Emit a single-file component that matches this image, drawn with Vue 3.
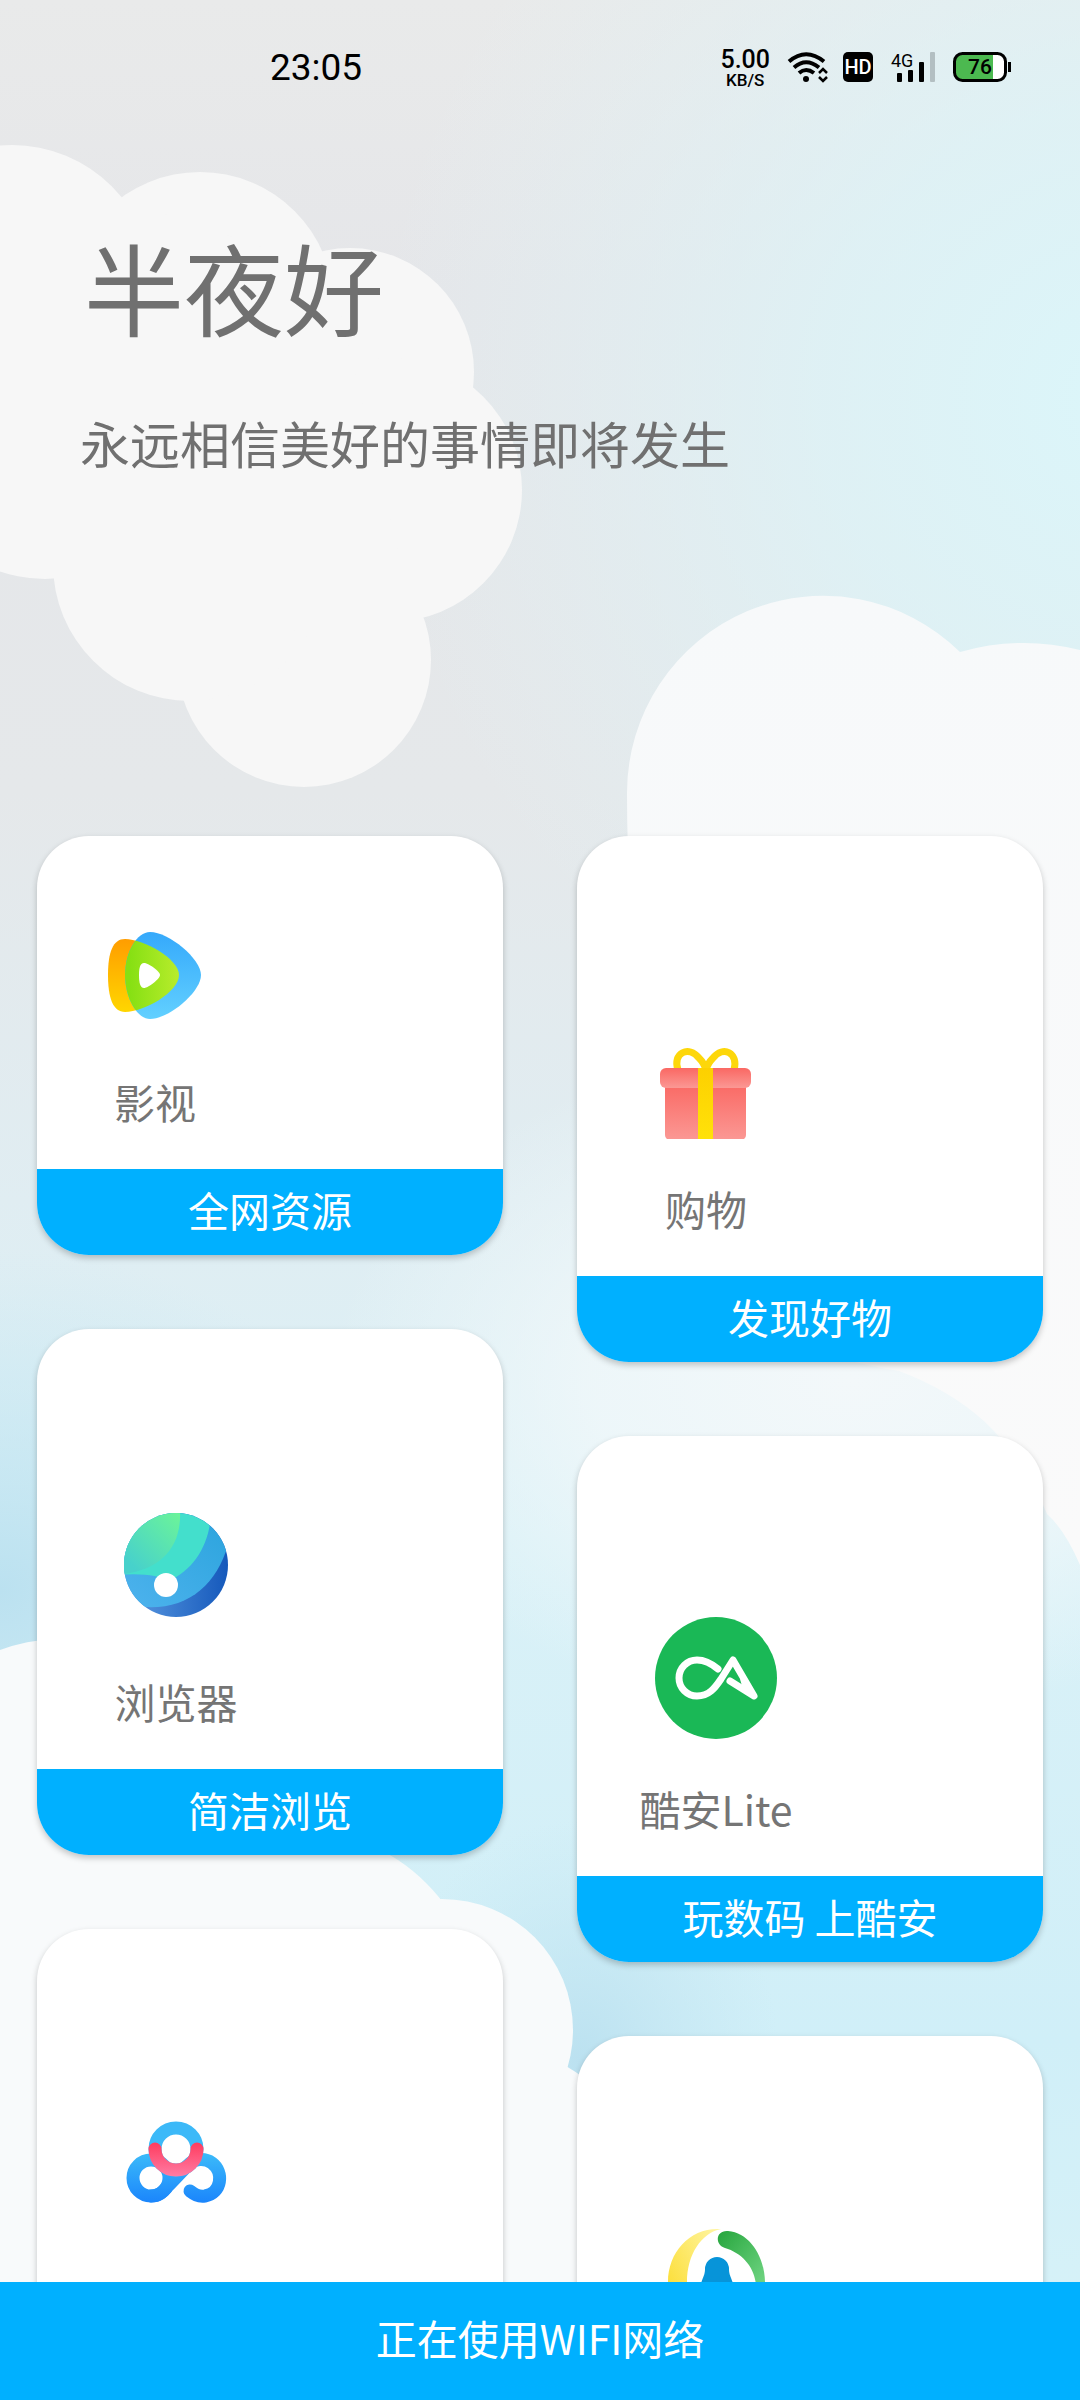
<script setup>
const columns = [
  [
    { id: 'video', name: '影视', tag: '全网资源', size: 'small' },
    { id: 'browser', name: '浏览器', tag: '简洁浏览', size: 'large' },
    { id: 'disk', name: '', tag: '', size: 'large' }
  ],
  [
    { id: 'gift', name: '购物', tag: '发现好物', size: 'medium' },
    { id: 'coolapk', name: '酷安Lite', tag: '玩数码 上酷安', size: 'large' },
    { id: 'ring', name: '', tag: '', size: 'large' }
  ]
]
</script>

<template>
  <div class="screen">
    <svg class="wallpaper" viewBox="0 0 1080 2400" preserveAspectRatio="xMidYMid slice" aria-hidden="true">
      <defs>
        <linearGradient id="sky" x1="0" y1="0" x2="0" y2="1">
          <stop offset="0" stop-color="#e9eaea" />
          <stop offset=".12" stop-color="#e5e6e9" />
          <stop offset=".33" stop-color="#e5e8ea" />
          <stop offset=".5" stop-color="#e0edf2" />
          <stop offset=".64" stop-color="#daf1f7" />
          <stop offset=".85" stop-color="#d0eff8" />
          <stop offset="1" stop-color="#d8f2f8" />
        </linearGradient>
        <radialGradient id="glowRight"><stop offset="0" stop-color="#dbf6fa" /><stop offset=".4" stop-color="#dcf4f8" stop-opacity=".75" /><stop offset="1" stop-color="#e0f2f6" stop-opacity="0" /></radialGradient>
        <radialGradient id="glowLeft"><stop offset="0" stop-color="#bbe1f0" /><stop offset="1" stop-color="#c5e7f2" stop-opacity="0" /></radialGradient>
        <radialGradient id="glowMid"><stop offset="0" stop-color="#f3f8fa" /><stop offset=".5" stop-color="#f1f8fa" stop-opacity=".8" /><stop offset="1" stop-color="#eef8fa" stop-opacity="0" /></radialGradient>
        <linearGradient id="cloudFade" x1="0" y1="0" x2="0" y2="1"><stop offset="0" stop-color="#f7f9fa" /><stop offset="1" stop-color="#fafafa" /></linearGradient>
      </defs>
      <rect width="1080" height="2400" fill="url(#sky)" />
      <ellipse cx="1130" cy="400" rx="760" ry="740" fill="url(#glowRight)" />
      <ellipse cx="0" cy="1590" rx="420" ry="340" fill="url(#glowLeft)" />
      <ellipse cx="580" cy="2060" rx="200" ry="240" fill="url(#glowLeft)" />
      <ellipse cx="850" cy="1380" rx="520" ry="340" fill="url(#glowMid)" />
      <g fill="#f7f7f7">
        <circle cx="12" cy="286" r="141" />
        <circle cx="200" cy="306" r="134" />
        <circle cx="350" cy="372" r="124" />
        <circle cx="390" cy="490" r="132" />
        <circle cx="304" cy="660" r="127" />
        <circle cx="190" cy="564" r="137" />
        <circle cx="45" cy="440" r="139" />
        <path d="M0 220 115 197 330 270 400 560 280 640 60 560 0 500Z" />
      </g>
      <path fill="url(#cloudFade)" d="M627 793A196 197 0 0 1 960 652Q1020 635 1080 650V1565Q1065 1530 1047 1514Q1025 1460 985 1422Q950 1390 899 1371Q760 1350 690 1250Q640 1160 640 1000Q627 900 627 793Z" />
      <g fill="#f8fafb">
        <circle cx="60" cy="1807" r="168" />
        <circle cx="295" cy="2015" r="186" />
        <circle cx="442" cy="2030" r="131" />
        <circle cx="470" cy="2230" r="190" />
        <path d="M0 1700 200 1780 400 1880 520 2400H0Z" />
      </g>
    </svg>

    <header class="status">
      <time class="clock">23:05</time>
      <div class="indicators">
        <div class="speed"><b>5.00</b><span>KB/S</span></div>
        <svg width="37" height="30" viewBox="0 0 37 30" overflow="visible" aria-label="Wi-Fi">
          <g fill="none" stroke="#000" stroke-width="4">
            <path d="M1 9.500Q18 -5 36 9.500" />
            <path d="M6 15.500Q18 5 31 15.500" />
            <path d="M11 21Q18 15 26 21" />
          </g>
          <circle cx="18" cy="27" r="3" />
          <path d="M31 21l4-4 4 4M31 25l4 4 4-4" fill="none" stroke="#000" stroke-width="2.500" />
        </svg>
        <span class="hd">HD</span>
        <svg width="44" height="30" viewBox="0 0 44 30" overflow="visible" aria-label="4G">
          <text x="0" y="15" font-size="18">4G</text>
          <rect x="6" y="21" width="5" height="9" rx="1" />
          <rect x="17" y="18" width="5" height="12" rx="1" />
          <rect x="28" y="10" width="5" height="20" rx="1" />
          <rect x="39" y="0" width="5" height="30" rx="1" fill="#b3bfc2" />
        </svg>
        <svg width="58" height="30" viewBox="0 0 58 30" aria-label="76%">
          <rect x="1.500" y="1.500" width="51" height="27" rx="8" fill="#fff" />
          <path d="M40 2H9a7 7 0 0 0-7 7v12a7 7 0 0 0 7 7h31Z" fill="#4cb950" />
          <rect x="1.500" y="1.500" width="51" height="27" rx="8" fill="none" stroke="#000" stroke-width="3" />
          <path d="M56.500 10v10" stroke="#000" stroke-width="3" />
          <text x="27" y="22" font-size="21" font-weight="500" text-anchor="middle">76</text>
        </svg>
      </div>
    </header>

    <main class="content">
      <h1>半夜好</h1>
      <p class="motto">永远相信美好的事情即将发生</p>
      <div class="columns">
        <div v-for="(column, i) in columns" :key="i" class="column">
          <a v-for="item in column" :key="item.id" href="#" class="card">
            <div class="body" :class="{ short: item.id === 'video' }">
              <div class="app" :class="item.size">
                <svg v-if="item.id === 'video'" class="icon" viewBox="0 0 122 122">
                  <defs>
                    <linearGradient id="vo" x1="0" y1="0" x2="0" y2="1"><stop stop-color="#ff9d00" /><stop offset="1" stop-color="#ffd600" /></linearGradient>
                    <linearGradient id="vb" x1="0" y1="0" x2="0" y2="1"><stop stop-color="#35a9fb" /><stop offset="1" stop-color="#62d0ff" /></linearGradient>
                    <linearGradient id="vg"><stop offset=".3" stop-color="#86e013" /><stop offset="1" stop-color="#b8ec2c" /></linearGradient>
                    <clipPath id="vc"><path d="M31 65C31 42 43 22 56 22C75 22 107 49 107 65C107 82 75 109 56 109C43 109 31 88 31 65Z" /></clipPath>
                  </defs>
                  <path fill="url(#vo)" d="M14 65C14 42 19 29 31 29C50 29 85 49 85 65C85 82 50 102 31 102C19 102 14 88 14 65Z" />
                  <path fill="url(#vb)" d="M31 65C31 42 43 22 56 22C75 22 107 49 107 65C107 82 75 109 56 109C43 109 31 88 31 65Z" />
                  <path clip-path="url(#vc)" fill="url(#vg)" d="M14 65C14 42 19 29 31 29C50 29 85 49 85 65C85 82 50 102 31 102C19 102 14 88 14 65Z" />
                  <path fill="#fff" d="M45 65C45 58 46 53 50 53C54 53 66 61 66 65C66 69 54 78 50 78C46 78 45 72 45 65Z" />
                </svg>
                <svg v-else-if="item.id === 'gift'" class="icon" viewBox="0 0 122 122">
                  <defs>
                    <linearGradient id="gr" x1="0" y1="0" x2="0" y2="1"><stop stop-color="#fa6863" /><stop offset="1" stop-color="#fb9894" /></linearGradient>
                    <linearGradient id="gy" x1="0" y1="0" x2="0" y2="1"><stop stop-color="#fdd000" /><stop offset="1" stop-color="#ffe20a" /></linearGradient>
                  </defs>
                  <path d="M33 53C27 36 44 28 54 41C58 45 60 49 61 53C62 49 64 45 68 41C78 28 94 36 89 53" fill="none" stroke="#fdd70a" stroke-width="7" />
                  <path d="M20 65h81v53a5 5 0 0 1-5 5H25a5 5 0 0 1-5-5Z" fill="url(#gr)" />
                  <rect x="15" y="51" width="91" height="20" rx="6" fill="url(#gr)" />
                  <path d="M53 51h15v72H53Z" fill="url(#gy)" />
                </svg>
                <svg v-else-if="item.id === 'browser'" class="icon" viewBox="0 0 122 122">
                  <defs>
                    <clipPath id="bc"><circle cx="61" cy="55" r="52" /></clipPath>
                    <linearGradient id="bg1" x1="0" y1="1" x2="1" y2="0"><stop offset=".2" stop-color="#47d1cb" /><stop offset="1" stop-color="#6df597" /></linearGradient>
                    <linearGradient id="bg2" x1="0" y1="1" x2="1" y2="0"><stop stop-color="#4fb3ee" /><stop offset="1" stop-color="#29a3dc" /></linearGradient>
                    <linearGradient id="bg3"><stop offset=".3" stop-color="#4a8ad8" /><stop offset="1" stop-color="#0f53b8" /></linearGradient>
                  </defs>
                  <g clip-path="url(#bc)">
                    <path fill="url(#bg3)" d="M0 0h122v122H0Z" />
                    <path fill="url(#bg2)" d="M0 0H118C116 60 84 100 30 97L0 90Z" />
                    <path fill="#43dfcc" d="M0 0H96C96 32 80 60 53 71Q40 62 0 65Z" />
                    <path fill="url(#bg1)" d="M0 0H65C67 38 45 62 0 65Z" />
                  </g>
                  <circle cx="51" cy="75" r="12" fill="#fff" />
                </svg>
                <svg v-else-if="item.id === 'coolapk'" class="icon" viewBox="0 0 122 122">
                  <circle cx="61" cy="61" r="61" fill="#1ab856" />
                  <path d="M63 52C57 47 50 43 42 43A18 18 0 0 0 42 79C54 79 60 71 66 62L78 43 99 79 75 64" fill="none" stroke="#fff" stroke-width="7" stroke-linecap="round" stroke-linejoin="round" />
                  <path d="M85 62l5 2 9 15-12-10Z" fill="#fff" />
                </svg>
                <svg v-else-if="item.id === 'disk'" class="icon" viewBox="0 0 122 122">
                  <defs>
                    <linearGradient id="db" gradientUnits="userSpaceOnUse" x1="0" y1="43" x2="0" y2="92"><stop stop-color="#3cbbf9" /><stop offset="1" stop-color="#1b86fc" /></linearGradient>
                    <linearGradient id="dr" gradientUnits="userSpaceOnUse" x1="0" y1="34" x2="0" y2="66"><stop stop-color="#ff3e61" /><stop offset="1" stop-color="#fe7ba3" /></linearGradient>
                  </defs>
                  <g fill="none" stroke-width="13" stroke-linecap="round">
                    <circle cx="36" cy="68" r="18" stroke="url(#db)" />
                    <path d="M36 86C46 86 49 80 54 75L72 56C79 48 90 48 97 53C109 62 107 83 90 86C83 87 79 84 75 81" stroke="url(#db)" />
                    <circle cx="61" cy="39" r="21" stroke="#3cb9f8" />
                    <path d="M40 39a21 21 0 0 0 42 0" stroke="url(#dr)" />
                  </g>
                </svg>
                <svg v-else class="icon" viewBox="0 0 122 122">
                  <defs>
                    <linearGradient id="ry" x1="1" y1="0" x2="0" y2="1"><stop stop-color="#fff6a5" /><stop offset="1" stop-color="#fbd81e" /></linearGradient>
                    <linearGradient id="rg" x1="0" y1="0" x2="1" y2="1"><stop stop-color="#26a53d" /><stop offset="1" stop-color="#72d684" /></linearGradient>
                  </defs>
                  <path d="M66 12C36 10 13 34 13 65C13 90 30 108 52 110C38 100 32 84 32 65C32 38 46 16 66 12Z" fill="url(#ry)" />
                  <path d="M73 14C96 16 111 42 110 69H101C100 50 87 36 70 31C59 27 61 13 73 14Z" fill="url(#rg)" />
                  <path d="M50 52a12 12 0 0 1 24 0C74 60 78 62 80 75H44C46 62 50 60 50 52Z" fill="#0794d9" />
                </svg>
                <span class="name">{{ item.name }}</span>
              </div>
            </div>
            <span v-if="item.tag" class="tag">{{ item.tag }}</span>
          </a>
        </div>
      </div>
    </main>

    <footer class="network">正在使用WIFI网络</footer>
  </div>
</template>

<style>
body {
  margin: 0;
}
</style>

<style scoped>
.screen {
  position: relative;
  isolation: isolate;
  display: flex;
  flex-direction: column;
  height: 100vh;
  overflow: hidden;
  font-family: "Noto Sans CJK SC", sans-serif;
  color: #707070;
}
.wallpaper {
  position: absolute;
  inset: 0;
  z-index: -1;
  width: 100%;
  height: 100%;
}
.status {
  display: flex;
  flex: none;
  align-items: center;
  justify-content: space-between;
  height: 134px;
  padding: 0 69px 0 270px;
  font-family: Roboto, sans-serif;
  color: #000;
}
.clock {
  font-size: 37px;
}
.indicators {
  display: flex;
  align-items: center;
  gap: 18px;
}
.speed {
  display: flex;
  flex-direction: column;
  align-items: center;
  padding-top: 2px;
  font-weight: 500;
}
.speed b {
  font-size: 25px;
  font-weight: 500;
  line-height: 24px;
}
.speed span {
  font-size: 17px;
  line-height: 16px;
}
.hd {
  width: 30px;
  border-radius: 5px;
  background: #000;
  color: #fff;
  font-size: 20px;
  font-weight: 500;
  line-height: 30px;
  text-align: center;
}
.content {
  flex: 1;
  min-height: 0;
  padding-top: 92px;
  overflow: hidden;
}
h1 {
  margin: 0 84px;
  font-size: 100px;
  font-weight: 400;
  line-height: 120px;
}
.motto {
  margin: 66px 80px 0;
  font-size: 50px;
  line-height: 60px;
}
.columns {
  display: grid;
  grid-template-columns: 1fr 1fr;
  gap: 74px;
  margin: 364px 37px 0;
}
.column {
  display: flex;
  flex-direction: column;
  gap: 74px;
}
.card {
  display: block;
  border-radius: 52px;
  overflow: hidden;
  background: #fff;
  box-shadow: 0 3px 6px rgba(0, 0, 0, 0.22);
  color: #757575;
  font-size: 41px;
  text-decoration: none;
}
.body {
  display: flex;
  align-items: flex-end;
  box-sizing: border-box;
  min-height: 440px;
  padding: 0 58px 41px;
}
.body.short {
  min-height: 333px;
}
.app {
  display: flex;
  flex-direction: column;
  align-items: center;
  gap: 42px;
}
.small {
  width: 120px;
}
.medium {
  width: 142px;
}
.large {
  width: 162px;
}
.icon {
  flex: none;
  width: 122px;
  height: 122px;
}
.name {
  min-height: 54px;
  line-height: 54px;
  white-space: nowrap;
}
.tag {
  display: block;
  padding-bottom: 6px;
  background: #00b0ff;
  color: #fff;
  line-height: 80px;
  text-align: center;
}
.network {
  flex: none;
  padding-bottom: 8px;
  background: #00b0ff;
  color: #fff;
  font-size: 41px;
  line-height: 110px;
  text-align: center;
}
</style>
